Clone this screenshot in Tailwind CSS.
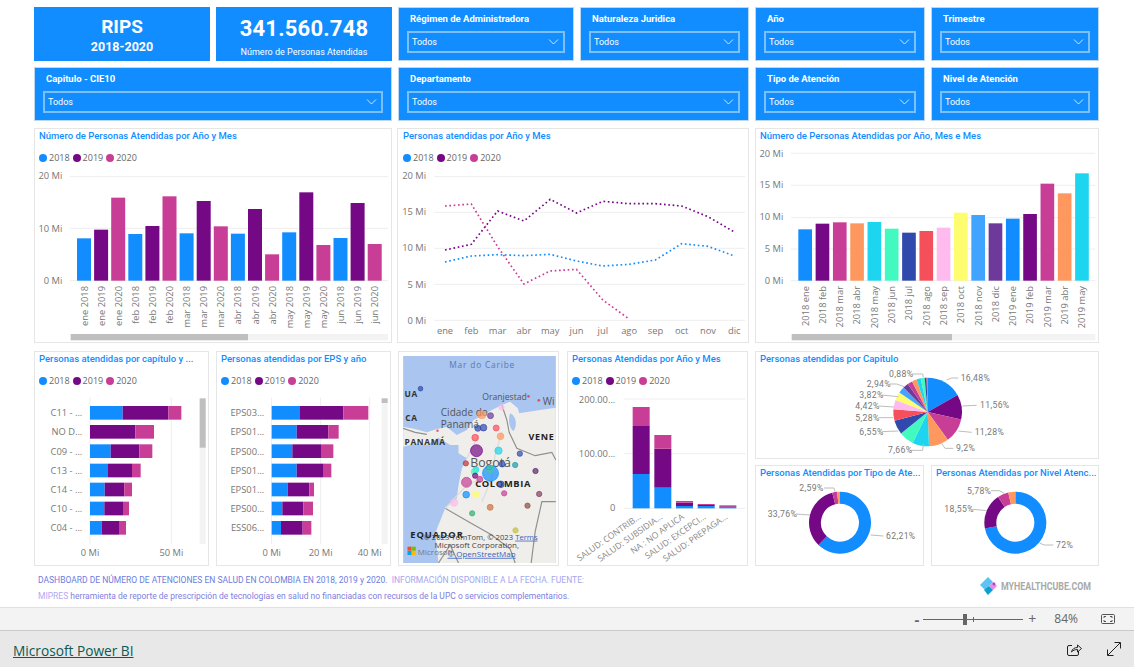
<!DOCTYPE html>
<html lang="es">
<head>
    <meta charset="UTF-8">
    <title>RIPS 2018-2020</title>
    <script src="https://cdn.jsdelivr.net/npm/@tailwindcss/browser@4"></script>
</head>
<body class="w-[1134px] h-[667px] overflow-hidden bg-white font-['Open_Sans',sans-serif]">
    <div class="h-[607px] pt-[7px] pl-[34px]">
        <!-- fila 1 -->
        <div class="flex h-[54px]">
            <div class="w-[176px] mr-[6px] bg-[#118DFF] text-white flex flex-col items-center font-['Roboto',sans-serif] font-bold">
                <div class="text-[19px] leading-[22px] mt-[9px]">RIPS</div>
                <div class="text-[12.5px] leading-[16px] mt-[1px]">2018-2020</div>
            </div>
            <div class="w-[176px] mr-[6px] bg-[#118DFF] text-white flex flex-col items-center font-['Roboto',sans-serif]">
                <div class="text-[22px] leading-[26px] mt-[9px] font-bold tracking-[0.2px]">341.560.748</div>
                <div class="text-[9px] leading-[12px] mt-[4px]">Número de Personas Atendidas</div>
            </div>
            <div class="w-[176px] mr-[6px] border border-[#b8d8f4] bg-[#118DFF] text-white px-[8px] font-['Roboto',sans-serif]">
                <div class="text-[9.5px] font-bold leading-[12px] mt-[5px] ml-[3px]">Régimen de Administradora</div>
                <div class="h-[22px] mt-[6px] border-2 border-[#7cc0fb] flex items-center justify-between pl-[3px] pr-[4px] text-[9px]"><span class="mt-[1px]">Todos</span><svg width="11" height="6" viewBox="0 0 11 6" fill="none" stroke="#cfe8ff"><path d="M1 .5l4.5 4.5L10 .5"/></svg></div>
            </div>
            <div class="w-[169px] mr-[6px] border border-[#b8d8f4] bg-[#118DFF] text-white px-[8px] font-['Roboto',sans-serif]">
                <div class="text-[9.5px] font-bold leading-[12px] mt-[5px] ml-[3px]">Naturaleza Juridica</div>
                <div class="h-[22px] mt-[6px] border-2 border-[#7cc0fb] flex items-center justify-between pl-[3px] pr-[4px] text-[9px]"><span class="mt-[1px]">Todos</span><svg width="11" height="6" viewBox="0 0 11 6" fill="none" stroke="#cfe8ff"><path d="M1 .5l4.5 4.5L10 .5"/></svg></div>
            </div>
            <div class="w-[170px] mr-[6px] border border-[#b8d8f4] bg-[#118DFF] text-white px-[8px] font-['Roboto',sans-serif]">
                <div class="text-[9.5px] font-bold leading-[12px] mt-[5px] ml-[3px]">Año</div>
                <div class="h-[22px] mt-[6px] border-2 border-[#7cc0fb] flex items-center justify-between pl-[3px] pr-[4px] text-[9px]"><span class="mt-[1px]">Todos</span><svg width="11" height="6" viewBox="0 0 11 6" fill="none" stroke="#cfe8ff"><path d="M1 .5l4.5 4.5L10 .5"/></svg></div>
            </div>
            <div class="w-[168px] border border-[#b8d8f4] bg-[#118DFF] text-white px-[8px] font-['Roboto',sans-serif]">
                <div class="text-[9.5px] font-bold leading-[12px] mt-[5px] ml-[3px]">Trimestre</div>
                <div class="h-[22px] mt-[6px] border-2 border-[#7cc0fb] flex items-center justify-between pl-[3px] pr-[4px] text-[9px]"><span class="mt-[1px]">Todos</span><svg width="11" height="6" viewBox="0 0 11 6" fill="none" stroke="#cfe8ff"><path d="M1 .5l4.5 4.5L10 .5"/></svg></div>
            </div>
        </div>
        <!-- fila 2 -->
        <div class="flex h-[54px] mt-[6px]">
            <div class="w-[358px] mr-[6px] border border-[#b8d8f4] bg-[#118DFF] text-white px-[8px] font-['Roboto',sans-serif]">
                <div class="text-[9.5px] font-bold leading-[12px] mt-[5px] ml-[3px]">Capitulo - CIE10</div>
                <div class="h-[22px] mt-[6px] border-2 border-[#7cc0fb] flex items-center justify-between pl-[3px] pr-[4px] text-[9px]"><span class="mt-[1px]">Todos</span><svg width="11" height="6" viewBox="0 0 11 6" fill="none" stroke="#cfe8ff"><path d="M1 .5l4.5 4.5L10 .5"/></svg></div>
            </div>
            <div class="w-[351px] mr-[6px] border border-[#b8d8f4] bg-[#118DFF] text-white px-[8px] font-['Roboto',sans-serif]">
                <div class="text-[9.5px] font-bold leading-[12px] mt-[5px] ml-[3px]">Departamento</div>
                <div class="h-[22px] mt-[6px] border-2 border-[#7cc0fb] flex items-center justify-between pl-[3px] pr-[4px] text-[9px]"><span class="mt-[1px]">Todos</span><svg width="11" height="6" viewBox="0 0 11 6" fill="none" stroke="#cfe8ff"><path d="M1 .5l4.5 4.5L10 .5"/></svg></div>
            </div>
            <div class="w-[170px] mr-[6px] border border-[#b8d8f4] bg-[#118DFF] text-white px-[8px] font-['Roboto',sans-serif]">
                <div class="text-[9.5px] font-bold leading-[12px] mt-[5px] ml-[3px]">Tipo de Atención</div>
                <div class="h-[22px] mt-[6px] border-2 border-[#7cc0fb] flex items-center justify-between pl-[3px] pr-[4px] text-[9px]"><span class="mt-[1px]">Todos</span><svg width="11" height="6" viewBox="0 0 11 6" fill="none" stroke="#cfe8ff"><path d="M1 .5l4.5 4.5L10 .5"/></svg></div>
            </div>
            <div class="w-[168px] border border-[#b8d8f4] bg-[#118DFF] text-white px-[8px] font-['Roboto',sans-serif]">
                <div class="text-[9.5px] font-bold leading-[12px] mt-[5px] ml-[3px]">Nivel de Atención</div>
                <div class="h-[22px] mt-[6px] border-2 border-[#7cc0fb] flex items-center justify-between pl-[3px] pr-[4px] text-[9px]"><span class="mt-[1px]">Todos</span><svg width="11" height="6" viewBox="0 0 11 6" fill="none" stroke="#cfe8ff"><path d="M1 .5l4.5 4.5L10 .5"/></svg></div>
            </div>
        </div>
        <!-- fila 3 -->
        <div class="flex h-[215px] mt-[7px]">
            <div class="w-[358px] mr-[5px] border border-[#e6e6e6]">
                <div class="h-[14px] pl-[4px] text-[9.5px] leading-[14px] text-[#118DFF] font-medium font-['Roboto',sans-serif] whitespace-nowrap">Número de Personas Atendidas por Año y Mes</div>
                <div class="legend flex items-center h-[12px] mt-[9px] pl-[4px] text-[9px] text-[#666]"></div>
                <svg id="c1" class="block mt-[1px]" width="356" height="177" viewBox="15 120 1068 531"></svg>
            </div>
            <div class="w-[352px] mr-[6px] border border-[#e6e6e6]">
                <div class="h-[14px] pl-[5px] text-[9.5px] leading-[14px] text-[#118DFF] font-medium font-['Roboto',sans-serif] whitespace-nowrap">Personas atendidas por Año y Mes</div>
                <div class="legend flex items-center h-[12px] mt-[9px] pl-[5px] text-[9px] text-[#666]"></div>
                <svg id="c2" class="block mt-[1px]" width="350" height="177" viewBox="9 120 1050 531"></svg>
            </div>
            <div class="w-[344px] border border-[#e6e6e6]">
                <div class="h-[14px] pl-[4px] text-[9.5px] leading-[14px] text-[#118DFF] font-medium font-['Roboto',sans-serif] whitespace-nowrap">Número de Personas Atendidas por Año, Mes e Mes</div>
                <svg id="c3" class="block mt-[3px]" width="342" height="196" viewBox="18 63 1026 588"></svg>
            </div>
        </div>
        <!-- fila 4 -->
        <div class="flex h-[215px] mt-[8px]">
            <div class="w-[175px] mr-[7px] border border-[#e6e6e6]">
                <div class="h-[14px] pl-[4px] text-[9.5px] leading-[14px] text-[#118DFF] font-medium font-['Roboto',sans-serif] whitespace-nowrap">Personas atendidas por capítulo y ...</div>
                <div class="legend flex items-center h-[12px] mt-[9px] pl-[4px] text-[9px] text-[#666]"></div>
                <svg id="c4" class="block mt-[3px]" width="173" height="175" viewBox="15 135 519 525"></svg>
            </div>
            <div class="w-[175px] mr-[7px] border border-[#e6e6e6]">
                <div class="h-[14px] pl-[4px] text-[9.5px] leading-[14px] text-[#118DFF] font-medium font-['Roboto',sans-serif] whitespace-nowrap">Personas atendidas por EPS y año</div>
                <div class="legend flex items-center h-[12px] mt-[9px] pl-[4px] text-[9px] text-[#666]"></div>
                <svg id="c5" class="block mt-[3px]" width="173" height="175" viewBox="561 135 519 525"></svg>
            </div>
            <div class="w-[161px] mr-[8px] border border-[#e6e6e6] p-[4px]">
                <svg id="map" class="block" width="153" height="207" viewBox="24 33 458 621"></svg>
            </div>
            <div class="w-[181px] mr-[7px] border border-[#e6e6e6]">
                <div class="h-[14px] pl-[4px] text-[9.5px] leading-[14px] text-[#118DFF] font-medium font-['Roboto',sans-serif] whitespace-nowrap">Personas Atendidas por Año y Mes</div>
                <div class="legend flex items-center h-[12px] mt-[9px] pl-[4px] text-[9px] text-[#666]"></div>
                <svg id="c6" class="block mt-[3px]" width="179" height="175" viewBox="520 135 537 525"></svg>
            </div>
            <div class="w-[344px] flex flex-col">
                <div class="h-[108px] border border-[#e6e6e6]">
                    <div class="h-[14px] pl-[4px] text-[9.5px] leading-[14px] text-[#118DFF] font-medium font-['Roboto',sans-serif] whitespace-nowrap">Personas atendidas por Capitulo</div>
                    <svg id="pie" class="block mt-[1px]" width="342" height="91" viewBox="18 66 1026 273"></svg>
                </div>
                <div class="flex mt-[6px] h-[101px]">
                    <div class="w-[169px] mr-[7px] border border-[#e6e6e6]">
                        <div class="h-[14px] pl-[4px] text-[9.5px] leading-[14px] text-[#118DFF] font-medium font-['Roboto',sans-serif] whitespace-nowrap">Personas Atendidas por Tipo de Ate...</div>
                        <svg id="d1" class="block mt-[1px]" width="167" height="84" viewBox="18 408 501 252"></svg>
                    </div>
                    <div class="w-[168px] border border-[#e6e6e6]">
                        <div class="h-[14px] pl-[4px] text-[9.5px] leading-[14px] text-[#118DFF] font-medium font-['Roboto',sans-serif] whitespace-nowrap">Personas Atendidas por Nivel Atenc...</div>
                        <svg id="d2" class="block mt-[1px]" width="166" height="84" viewBox="548 408 498 252"></svg>
                    </div>
                </div>
            </div>
        </div>
        <!-- pie de pagina -->
        <div class="flex justify-between mt-[6px] pl-[4px] pr-[40px]">
            <div class="text-[8.5px] leading-[16px] font-['Roboto',sans-serif] whitespace-nowrap">
                <div><span class="text-[#6a7de0]">DASHBOARD DE NÚMERO DE ATENCIONES EN SALUD EN COLOMBIA EN 2018, 2019 y 2020.</span> <span class="text-[#a5a6ee]">&nbsp;INFORMACIÓN DISPONIBLE A LA FECHA. FUENTE:</span></div>
                <div><span class="text-[#b3a8f2]">MIPRES</span> <span class="text-[#7f80de]">herramienta de reporte de prescripción de tecnologías en salud no financiadas con recursos de la UPC o servicios complementarios.</span></div>
            </div>
            <div class="flex items-center gap-[3px] h-[20px] mt-[4px]">
                <svg width="18" height="18" viewBox="0 0 18 18"><path d="M8 0l5 5-8 8-5-5z" fill="#5cc4f2"/><path d="M13 5l4 4-4 4-4-4z" fill="#e58be8"/><path d="M9 9l4 4-5 5-4-5z" fill="#0e9fd2"/><circle cx="14" cy="7" r="1.4" fill="#b23fc0"/></svg>
                <svg width="93" height="14" viewBox="0 0 93 14"><text x="0" y="11" textLength="90" lengthAdjust="spacingAndGlyphs" font-size="11" font-weight="700" font-family="Roboto" fill="#a9a9a9">MYHEALTHCUBE.COM</text></svg>
            </div>
        </div>
    </div>
    <!-- barra de zoom -->
    <div class="h-[24px] bg-[#f3f3f3] border-t border-b border-t-[#e0e0e0] border-b-[#c8c8c8] flex items-center justify-end text-[#666]">
        <span class="text-[15px] font-bold leading-none mr-[4px]">-</span>
        <div class="relative w-[100px] h-[1px] bg-[#666] mr-[5px]">
            <div class="absolute left-[40px] top-[-5px] w-[4px] h-[11px] bg-[#666]"></div>
            <div class="absolute left-[50px] top-[-2px] w-[1px] h-[5px] bg-[#666]"></div>
        </div>
        <span class="text-[14px] leading-none mr-[18px]">+</span>
        <span class="text-[12px] leading-none mr-[23px]">84%</span>
        <svg class="mr-[19px]" width="14" height="10" viewBox="0 0 14 10" fill="none" stroke="#555"><rect x=".5" y=".5" width="13" height="9" rx="1"/><path d="M3 4V2.500h2M9 2.500h2V4M11 6v1.500H9M5 7.500H3V6"/></svg>
    </div>
    <!-- barra inferior -->
    <div class="h-[36px] bg-[#e8e8e8] flex items-center justify-between pl-[13px] pr-[13px]">
        <a class="text-[13.7px] mt-[5px] text-[#0b5a55] underline">Microsoft Power BI</a>
        <div class="flex items-center gap-[25px]">
            <svg width="15" height="13" viewBox="0 0 15 13" fill="none" stroke="#222"><path d="M5 2.500H2a1.500 1.500 0 0 0-1.500 1.500v7A1.500 1.500 0 0 0 2 12.500h8a1.500 1.500 0 0 0 1.500-1.500V8"/><path d="M4.500 9c.5-3 3-4.500 6-4.500V2l4 3.500-4 3.500V6.500c-2.500 0-4.500.8-6 2.500z"/></svg>
            <svg width="14" height="14" viewBox="0 0 14 14" fill="none" stroke="#222"><path d="M1 13L13 1M7.500.5h6v6M.5 7.500v6h6"/></svg>
        </div>
    </div>

    <script>
        const BLUE = '#118DFF', PURPLE = '#750985', PINK = '#C83D95';
        const PALETTE = ['#118DFF', '#750985', '#C83D95', '#FF985E', '#1DD5EE', '#42F9C0', '#3049AD', '#F64F5C', '#FFBBED', '#FDFD6F', '#41A4FF', '#6D3A9C'];
        const YEARS = [['2018', BLUE], ['2019', PURPLE], ['2020', PINK]];

        // leyenda de cada panel
        document.querySelectorAll('.legend').forEach(el => {
            el.innerHTML = YEARS.map(y =>
                `<span style="background:${y[1]}" class="w-[8px] h-[8px] rounded-full mr-[2px]"></span><span class="mr-[3px]">${y[0]}</span>`
            ).join('');
        });

        function text(x, y, s, o = {}) {
            const size = o.size || 28, fill = o.fill || '#777', anchor = o.anchor || 'end';
            const extra = o.rotate !== undefined ? `transform="rotate(${o.rotate} ${x} ${y})"` : '';
            return `<text x="${x}" y="${y}" font-size="${size}" fill="${fill}" text-anchor="${anchor}" dominant-baseline="central" font-family="${o.font || 'Open Sans'}" font-weight="${o.weight || 400}" letter-spacing="${o.spacing || 0}" ${o.deco ? `text-decoration="${o.deco}"` : ''} ${extra}>${s}</text>`;
        }
        const line = (x1, y1, x2, y2, c = '#eeeeee', w = 3) => `<line x1="${x1}" y1="${y1}" x2="${x2}" y2="${y2}" stroke="${c}" stroke-width="${w}"/>`;
        const rect = (x, y, w, h, c) => `<rect x="${x}" y="${y}" width="${w}" height="${h}" fill="${c}"/>`;

        // grafico 1: columnas por año y mes
        let s = '';
        [[155, '20 Mi', 152], [310, '10 Mi', 310], [467, '0 Mi', 466]].forEach(g => {
            s += line(120, g[0], 1074, g[0]) + text(97, g[2], g[1]);
        });
        const tops1 = [340, 314, 218, 327, 303, 214, 325, 228, 304, 326, 252, 388, 322, 202, 360, 339, 234, 357];
        const labels1 = ['ene', 'feb', 'mar', 'abr', 'may', 'jun'];
        tops1.forEach((t, i) => {
            const x = 141 + i * 51.3;
            s += rect(x, t, 42, 467 - t, [BLUE, PURPLE, PINK][i % 3]);
            s += text(x + 21, 483, labels1[Math.floor(i / 3)] + ' ' + (2018 + i % 3), { rotate: -90 });
        });
        s += rect(122, 627, 532, 19, '#bfbfbf') + rect(654, 627, 420, 19, '#f3f3f3');
        document.getElementById('c1').innerHTML = s;

        // grafico 2: lineas
        s = '';
        [[155, '20 Mi', 152], [262, '15 Mi', 260], [370, '10 Mi', 368], [478, '5 Mi', 478], [586, '0 Mi', 586]].forEach(g => {
            s += line(117, g[0], 1050, g[0]) + text(93, g[2], g[1]);
        });
        const meses = ['ene', 'feb', 'mar', 'abr', 'may', 'jun', 'jul', 'ago', 'sep', 'oct', 'nov', 'dic'];
        const mx = i => 150 + i * 78.9;
        meses.forEach((m, i) => { s += text(mx(i), 615, m, { anchor: 'middle' }); });
        [
            [[411, 393, 389, 392, 388, 408, 423, 418, 405, 356, 364, 393], BLUE],
            [[375, 358, 258, 288, 223, 264, 229, 236, 236, 243, 275, 321], PURPLE],
            [[243, 237, 365, 477, 438, 433, 525, 582], PINK]
        ].forEach(l => {
            const pts = l[0].map((y, i) => mx(i) + ',' + y).join(' ');
            s += `<polyline points="${pts}" fill="none" stroke="${l[1]}" stroke-width="5" stroke-dasharray="5 8"/>`;
        });
        document.getElementById('c2').innerHTML = s;

        // grafico 3: columnas por mes
        s = '';
        [[85, '20 Mi', 85], [181, '15 Mi', 179], [278, '10 Mi', 274], [372, '5 Mi', 370], [467, '0 Mi', 467]].forEach(g => {
            s += line(123, g[0], 1036, g[0]) + text(100, g[2], g[1]);
        });
        const tops3 = [313, 296, 292, 295, 291, 311, 323, 318, 308, 263, 270, 295, 281, 267, 176, 205, 145];
        tops3.forEach((t, i) => {
            const x = 145 + i * 51.9;
            s += rect(x, t, 41, 467 - t, PALETTE[i % 12]);
            s += text(x + 20, 483, (i < 12 ? '2018 ' : '2019 ') + meses[i % 12], { rotate: -90 });
        });
        s += rect(125, 627, 481, 19, '#bfbfbf') + rect(606, 627, 430, 19, '#f3f3f3');
        document.getElementById('c3').innerHTML = s;

        // graficos 4 y 5: barras apiladas horizontales
        const rowsY = [183, 240, 298, 356, 413, 470, 528];
        function stacked(id, x0, labelX, labels, rows, ticks, sbX, thumb) {
            let out = '';
            ticks.forEach(t => { out += line(t[0], 158, t[0], 597) + text(t[0], 622, t[1], { anchor: 'middle' }); });
            out += rect(sbX, 160, 18, 437, '#f3f3f3') + rect(sbX, 160, 18, thumb, '#bfbfbf');
            rows.forEach((r, i) => {
                out += text(labelX, rowsY[i] + 20, labels[i]);
                out += rect(x0, rowsY[i], r[0] - x0, 41, BLUE) + rect(r[0], rowsY[i], r[1] - r[0], 41, PURPLE) + rect(r[1], rowsY[i], r[2] - r[1], 41, PINK);
            });
            document.getElementById(id).innerHTML = out;
        }
        stacked('c4', 180, 157, ['C11 - ...', 'NO D...', 'C09 - ...', 'C13 - ...', 'C14 - ...', 'C10 - ...', 'C04 - ...'],
            [[278, 415, 454], [180, 316, 372], [242, 328, 367], [234, 306, 332], [224, 283, 306], [223, 279, 297], [215, 267, 288]],
            [[180, '0 Mi'], [424, '50 Mi']], 509, 148);
        stacked('c5', 725, 703, ['EPS03...', 'EPS01...', 'EPS00...', 'EPS01...', 'EPS01...', 'EPS00...', 'ESS06...'],
            [[810, 940, 1015], [800, 895, 926], [787, 873, 910], [800, 879, 904], [773, 838, 852], [757, 820, 849], [753, 818, 844]],
            [[725, '0 Mi'], [872, '20 Mi'], [1019, '40 Mi']], 1055, 14);

        // mapa
        s = rect(24, 33, 458, 621, '#a9c5f0');
        s += `<path d="M24 245L60 252 95 262 125 252 155 246 185 270 215 255 235 225 262 212 290 195 320 180 345 170 368 190 372 205 430 196 482 188V654H130L120 565 150 490 185 460 190 420 200 370 215 340 190 325 190 300 165 300 130 278 95 300 60 296 24 305Z" fill="#efeeea"/>`;
        s += `<path d="M345 205C362 212 368 240 355 258 342 250 338 222 345 205Z" fill="#a9c5f0"/>`;
        s += `<path d="M320 180L335 225 342 262 365 310 420 332 470 322 482 345M482 470L440 470 420 560 408 654M150 490L220 530 290 570 345 612 360 654M24 250L60 262 95 268M130 654L165 600 190 654" fill="none" stroke="#8f8f8f" stroke-width="3.500"/>`;
        s += `<path d="M215 340L235 300 250 270M260 470L290 400 300 330 320 260M150 490L215 420 260 400" fill="none" stroke="#dedcd8" stroke-width="4"/>`;
        s += text(261, 58, 'Mar do Caribe', { anchor: 'middle', size: 25, fill: '#5b7aa6', spacing: 2.500 });
        s += text(28, 146, 'UA', { anchor: 'start', size: 25, fill: '#333', weight: 700, spacing: 2 });
        s += text(30, 217, 'CA', { anchor: 'start', size: 25, fill: '#333', weight: 700, spacing: 2 });
        s += text(28, 288, 'PANAMÁ', { anchor: 'start', size: 25, fill: '#333', weight: 700, spacing: 2 });
        s += text(137, 200, 'Cidade do', { anchor: 'start', size: 30, fill: '#555' });
        s += text(137, 236, 'Panamá', { anchor: 'start', size: 30, fill: '#555' });
        s += text(261, 155, 'Oranjestad', { anchor: 'start', size: 26, fill: '#555' });
        s += text(443, 168, 'Wi', { anchor: 'start', size: 30, fill: '#555' });
        s += text(400, 273, 'VENE', { anchor: 'start', size: 27, fill: '#222', weight: 700, spacing: 2 });
        s += `<circle cx="400" cy="154" r="4" fill="#e2504f"/><circle cx="431" cy="166" r="4" fill="#e2504f"/><circle cx="127" cy="257" r="3.500" fill="#e2504f"/>`;
        const bubbles = [[76, 131, 7, '#3049AD'], [319, 187, 8, '#FFBBED'], [260, 209, 12, '#FF985E'], [286, 212, 9, '#6D3A9C'], [248, 250, 9, '#3049AD'], [265, 248, 10, '#3049AD'], [303, 249, 9, '#F64F5C'], [240, 278, 10, '#F64F5C'], [316, 274, 10, '#FF985E'], [244, 317, 18, '#750985'], [310, 317, 11, '#1DD5EE'], [374, 326, 8, '#3049AD'], [212, 355, 8, '#C0303C'], [321, 357, 9, '#3049AD'], [360, 360, 8, '#1D9BAE'], [242, 374, 9, '#1DD5EE'], [237, 380, 9, '#42F9C0'], [421, 378, 8, '#5B2A6A'], [240, 392, 8, '#750985'], [254, 403, 9, '#C83D95'], [214, 412, 15, '#C83D95'], [317, 418, 10, '#3049AD'], [327, 445, 8, '#C83D95'], [432, 447, 8, '#80405F'], [213, 449, 10, '#118DFF'], [242, 448, 10, '#FDFD6F'], [177, 473, 11, '#FFBBED'], [285, 487, 9, '#D07040'], [397, 482, 8, '#905040'], [231, 505, 8, '#30B070'], [361, 556, 8, '#C0C040'], [286, 385, 24, '#118DFF'], [285, 372, 11, '#42C9A0']];
        s += text(225, 352, 'Bogotá', { anchor: 'start', size: 37, fill: '#555' });
        s += text(240, 415, 'COLOMBIA', { anchor: 'start', size: 28, fill: '#222', weight: 700, spacing: 2 });
        s += text(45, 567, 'EQUADOR', { anchor: 'start', size: 28, fill: '#222', weight: 700, spacing: 3 });
        bubbles.forEach(b => {
            s += `<circle cx="${b[0]}" cy="${b[1]}" r="${b[2]}" fill="${b[3]}" fill-opacity="0.7" stroke="${b[3]}" stroke-width="2"/>`;
        });
        s += text(85, 575, '© 2023 TomTom, © 2023', { anchor: 'start', size: 23, fill: '#444' });
        s += text(360, 575, 'Terms', { anchor: 'start', size: 23, fill: '#3a5fc0', deco: 'underline' });
        s += text(118, 598, 'Microsoft Corporation,', { anchor: 'start', size: 24, fill: '#444' });
        s += text(68, 619, 'Microsoft', { anchor: 'start', size: 24, fill: '#777' });
        s += text(157, 625, '© OpenStreetMap', { anchor: 'start', size: 24, fill: '#3a5fc0', deco: 'underline' });
        s += rect(37, 605, 12, 12, '#F25022') + rect(50, 605, 12, 12, '#7FBA00') + rect(37, 618, 12, 12, '#00A4EF') + rect(50, 618, 12, 12, '#FFB900');
        document.getElementById('map').innerHTML = s;

        // grafico 6: columnas apiladas
        s = '';
        [[162, '200.00...', 162], [326, '100.00...', 326], [490, '0', 488]].forEach(g => {
            s += line(688, g[0], 1052, g[0]) + text(662, g[2], g[1]);
        });
        [[387, 243, 186], [428, 311, 270], [483, 473, 468], [483, 480, 477], [486, 484, 481]].forEach((b, i) => {
            const x = 714 + i * 65;
            s += rect(x, b[0], 51, 490 - b[0], BLUE) + rect(x, b[1], 51, b[0] - b[1], PURPLE) + rect(x, b[2], 51, b[1] - b[2], PINK);
            s += text(x + 21, 512, ['SALUD: CONTRIB...', 'SALUD: SUBSIDIA...', 'NA : NO APLICA', 'SALUD: EXCEPCI...', 'SALUD: PREPAGA...'][i], { rotate: -35, fill: '#888', size: 26 });
        });
        document.getElementById('c6').innerHTML = s;

        // tortas y anillos
        function arc(cx, cy, R, r, a0, a1) {
            const p = (rad, a) => [cx + rad * Math.sin(a), cy - rad * Math.cos(a)].map(n => n.toFixed(2)).join(' ');
            const big = a1 - a0 > Math.PI ? 1 : 0;
            if (r === 0) return `M${cx} ${cy}L${p(R, a0)}A${R} ${R} 0 ${big} 1 ${p(R, a1)}Z`;
            return `M${p(R, a0)}A${R} ${R} 0 ${big} 1 ${p(R, a1)}L${p(r, a1)}A${r} ${r} 0 ${big} 0 ${p(r, a0)}Z`;
        }
        function pie(id, cx, cy, R, r, vals, colors, labels) {
            const total = vals.reduce((a, b) => a + b, 0);
            let a = 0, out = '';
            vals.forEach((v, i) => {
                const b = a + v / total * Math.PI * 2;
                out += `<path d="${arc(cx, cy, R, r, a, b)}" fill="${colors[i]}"/>`;
                a = b;
            });
            labels.forEach(l => {
                out += `<polyline points="${l[3]}" fill="none" stroke="#bdbdbd" stroke-width="3"/>`;
                out += text(l[0], l[1], l[2], { anchor: 'start', size: 26, font: 'Roboto', fill: '#777', spacing: 1 });
            });
            document.getElementById(id).innerHTML = out;
        }
        pie('pie', 533, 201, 103, 0,
            [16.48, 11.56, 11.28, 9.2, 7.66, 6.9, 6.55, 5.28, 4.42, 3.82, 2.94, 2.5, 2.3, 2.2, 2, 1.8, 0.88, 0.5],
            PALETTE.concat(['#C83D95', '#FF985E', '#1DD5EE', '#42F9C0', '#3049AD', '#F64F5C']),
            [[632, 99, '16,48%', '590,105 605,99 625,99'], [690, 181, '11,56%', '637,183 680,181'], [674, 261, '11,28%', '625,258 665,262'],
             [618, 310, '9,2%', '575,295 585,310 610,310'], [414, 316, '7,66%', '520,297 518,316 480,316'], [328, 261, '6,55%', '445,258 395,260'],
             [316, 219, '5,28%', '430,218 385,218'], [316, 183, '4,42%', '432,186 385,183'], [328, 150, '3,82%', '445,155 395,150'],
             [350, 117, '2,94%', '462,125 440,117 418,117'], [417, 87, '0,88%', '520,97 518,87 485,87']]);
        pie('d1', 270, 533, 93, 57, [62.21, 33.76, 2.59, 1.44], [BLUE, PURPLE, PINK, '#FF985E'],
            [[148, 429, '2,59%', '255,440 252,429 222,429'], [53, 507, '33,76%', '180,510 138,507'], [408, 573, '62,21%', '362,570 400,573']]);
        pie('d2', 798, 533, 93, 57, [72, 18.55, 5.78, 3.67], [BLUE, PURPLE, PINK, '#FF985E'],
            [[653, 439, '5,78%', '765,445 750,437 725,437'], [585, 493, '18,55%', '712,497 672,493'], [920, 600, '72%', '872,595 885,600 912,600']]);
    </script>
</body>
</html>
